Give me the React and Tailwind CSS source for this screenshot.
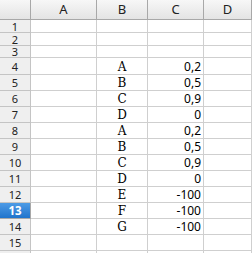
import React from "react";

const rows = [
  { n: 1, h: 13, b: "", c: "" },
  { n: 2, h: 13, b: "", c: "" },
  { n: 3, h: 12, b: "", c: "" },
  { n: 4, h: 17, b: "A", c: "0,2" },
  { n: 5, h: 16, b: "B", c: "0,5" },
  { n: 6, h: 16, b: "C", c: "0,9" },
  { n: 7, h: 16, b: "D", c: "0" },
  { n: 8, h: 16, b: "A", c: "0,2" },
  { n: 9, h: 16, b: "B", c: "0,5" },
  { n: 10, h: 16, b: "C", c: "0,9" },
  { n: 11, h: 16, b: "D", c: "0" },
  { n: 12, h: 16, b: "E", c: "-100" },
  { n: 13, h: 16, b: "F", c: "-100" },
  { n: 14, h: 16, b: "G", c: "-100" },
  { n: 15, h: 16, b: "", c: "" },
  { n: 16, h: 16, b: "", c: "", hide: true },
];

const heights = {
  12: "h-[12px]",
  13: "h-[13px]",
  16: "h-[16px]",
  17: "h-[17px]",
};

export default function App() {
  return (
    <div className="w-[252px] h-[253px] overflow-hidden bg-white font-sans text-[12px] text-black">
      <div className="flex h-[20px] bg-gradient-to-b from-[#f7f7f7] to-[#e4e4e4] border-b border-[#a8a8a8] text-[13px]">
        <div className="w-[31px] shrink-0 border-r border-[#a8a8a8]" />
        <div className="w-[66px] shrink-0 border-r border-[#a8a8a8] flex items-center justify-center text-[#222]">A</div>
        <div className="w-[51px] shrink-0 border-r border-[#a8a8a8] flex items-center justify-center text-[#222]">B</div>
        <div className="w-[56px] shrink-0 border-r border-[#a8a8a8] flex items-center justify-center text-[#222]">C</div>
        <div className="w-[48px] shrink-0 border-r border-[#a8a8a8] flex items-center justify-center text-[#222]">D</div>
        <div className="flex-1" />
      </div>
      {rows.map((r) => {
        const sel = r.n === 13;
        return (
          <div key={r.n} className={`flex ${heights[r.h]}`}>
            <div
              className={
                sel
                  ? "w-[31px] shrink-0 border-r border-b border-[#a8a8a8] bg-gradient-to-b from-[#4d9be6] to-[#1f74cc] text-white font-bold flex items-center justify-center leading-[11px] text-[11.5px]"
                  : "w-[31px] shrink-0 border-r border-b border-[#c4c4c4] bg-[#efefef] text-[#222] flex items-center justify-center leading-[11px] text-[11px]"
              }
            >
              {r.hide ? "" : r.n}
            </div>
            <div className="w-[66px] shrink-0 border-r border-b border-[#cfcfcf]" />
            <div className="w-[51px] shrink-0 border-r border-b border-[#cfcfcf] flex items-end justify-center leading-[14px] font-['DejaVu_Serif',serif] text-[12px]">
              {r.b}
            </div>
            <div className="w-[56px] shrink-0 border-r border-b border-[#cfcfcf] flex items-end justify-end pr-[2px] leading-[14px]">
              {r.c}
            </div>
            <div className="w-[48px] shrink-0 border-r border-b border-[#cfcfcf]" />
            <div className="flex-1 border-b border-[#cfcfcf]" />
          </div>
        );
      })}
    </div>
  );
}
